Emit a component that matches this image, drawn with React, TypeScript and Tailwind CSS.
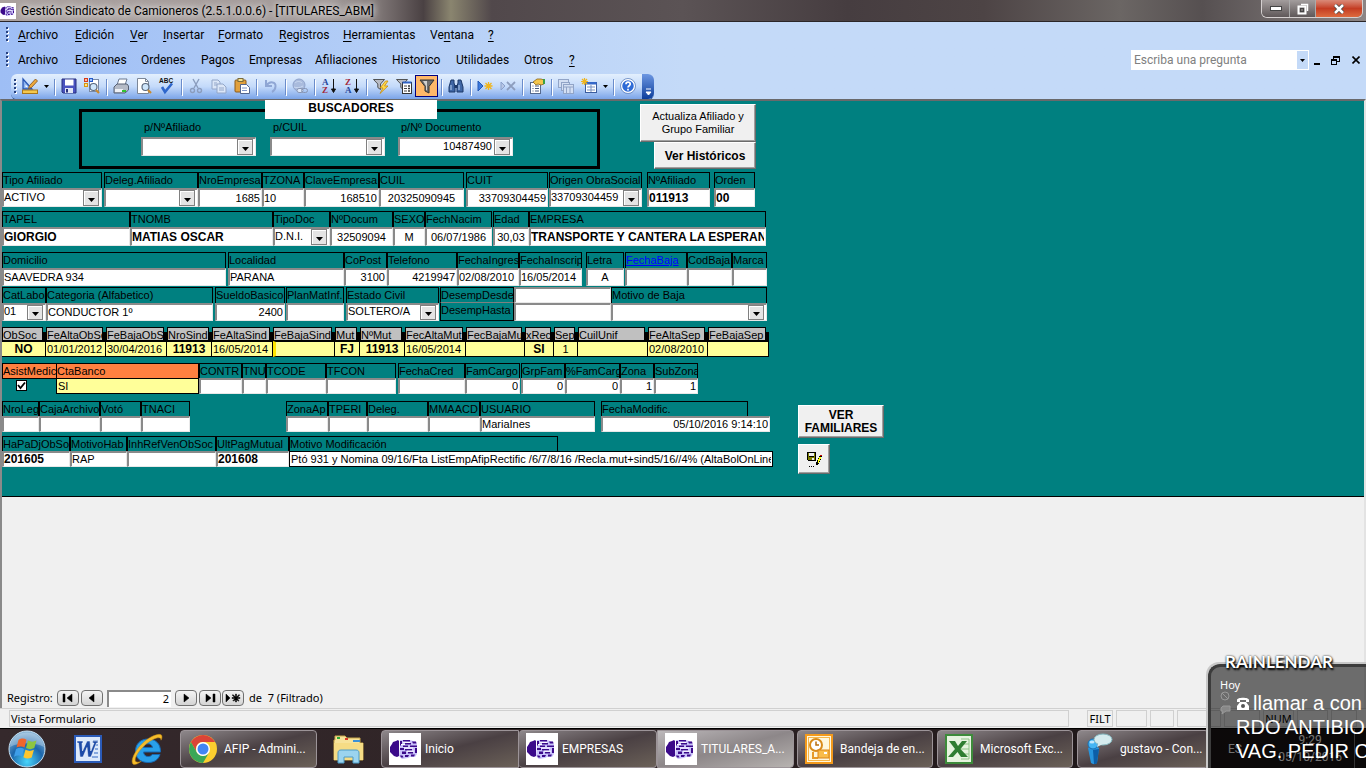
import { useId } from "react";
import type { ReactNode } from "react";

/* ---------- Form fields ---------- */

type FieldProps = {
  label: string;
  w: string;
  value?: string;
  align?: string;
  bold?: boolean;
  select?: boolean;
  small?: boolean;
  mid?: boolean;
  labelClass?: string;
  boxClass?: string;
  className?: string;
};

function Arrow() {
  return (
    <span className="pointer-events-none absolute top-0 right-0.5 bottom-0 flex w-4 items-end justify-center border border-[#808080] bg-[#e4e4e4] pb-[3px] shadow-[inset_1px_1px_0_#ffffff]">
      <svg width="7" height="4" viewBox="0 0 7 4" aria-hidden="true">
        <path d="M0 0h7L3.500 4z" fill="#000" />
      </svg>
    </span>
  );
}

const SUNKEN = "border-t-2 border-l-2 border-r border-b border-t-[#8a8a8a] border-l-[#8a8a8a] border-r-[#e8e8e8] border-b-[#e8e8e8] bg-white";

function Box({ id, value = "", align = "text-left", bold, select, className = "" }: {
  id?: string; value?: string; align?: string; bold?: boolean; select?: boolean; className?: string;
}) {
  const font = bold ? "text-[12px] font-bold" : "text-[11px]";
  return (
    <div className={`relative flex overflow-hidden ${className}`}>
      {select ? (
        <>
          <select id={id} defaultValue={value} className={`h-full w-full appearance-none bg-transparent pr-5 pb-0.5 leading-none outline-none ${align} ${font}`}>
            <option value={value}>{value}</option>
          </select>
          <Arrow />
        </>
      ) : (
        <input id={id} defaultValue={value} className={`h-full w-full min-w-0 bg-transparent pr-px pb-px leading-none outline-none ${align} ${font}`} />
      )}
    </div>
  );
}

function Field({ label, w, value, align, bold, select, small, mid, labelClass = "", boxClass = "", className = "" }: FieldProps) {
  const id = useId();
  const height = small ? "h-4" : mid ? "h-[18px]" : "h-[19px]";
  return (
    <div className={`flex shrink-0 flex-col ${w} ${className}`}>
      <label htmlFor={id} className={`block overflow-hidden border-t border-r border-l border-black text-[11px] leading-[14px] whitespace-nowrap ${small ? "h-[15px]" : "h-4"} ${labelClass}`}>
        {label}
      </label>
      <Box id={id} value={value} align={align} bold={bold} select={select} className={`${height} ${boxClass || SUNKEN}`} />
    </div>
  );
}

function Finder({ label, w, value, className = "" }: { label: string; w: string; value?: string; className?: string }) {
  const id = useId();
  return (
    <div className={`flex flex-col ${w} ${className}`}>
      <label htmlFor={id} className="h-4 pl-[3px] text-[11px] leading-[13px] whitespace-nowrap">{label}</label>
      <Box id={id} select value={value} align="text-right" className={`h-[19px] ${SUNKEN}`} />
    </div>
  );
}

type Strip = { l: string; v?: string; w: string; b?: boolean; a?: string; c?: string };

const STRIP: Strip[] = [
  { l: "ObSoc", v: "NO", w: "w-[44px]", b: true, a: "text-center" },
  { l: "FeAltaObSoc", v: "01/01/2012", w: "w-[60px]" },
  { l: "FeBajaObS", v: "30/04/2016", w: "w-[61px]" },
  { l: "NroSind", v: "11913", w: "w-[45px]", b: true, a: "text-center" },
  { l: "FeAltaSind", v: "16/05/2014", w: "w-[61px]" },
  { l: "FeBajaSind", w: "w-[62px]", c: "border-l-[3px] border-l-[#ffe600]" },
  { l: "Mut", v: "FJ", w: "w-[25px]", b: true, a: "text-center" },
  { l: "NºMut", v: "11913", w: "w-[45px]", b: true, a: "text-center" },
  { l: "FecAltaMut", v: "16/05/2014", w: "w-[61px]" },
  { l: "FecBajaMut", w: "w-[59px]" },
  { l: "xRec", v: "SI", w: "w-[29px]", b: true, a: "text-center" },
  { l: "Sep", v: "1", w: "w-[24px]", a: "text-center" },
  { l: "CuilUnif", w: "w-[70px]" },
  { l: "FeAltaSep", v: "02/08/2010", w: "w-[60px]" },
  { l: "FeBajaSep", w: "w-[61px]" },
];

function StripCell({ l, v, w, b, a, c = "" }: Strip) {
  const id = useId();
  return (
    <div className={`flex flex-col ${w}`}>
      <div className="flex h-[14px] bg-[linear-gradient(#008080_5px,#000_5px)] pr-[3px] pb-px">
        <label htmlFor={id} className="block h-[13px] w-full overflow-hidden border border-b-0 border-black bg-[#c0c0c0] text-[11px] leading-[15px] whitespace-nowrap">{l}</label>
      </div>
      <Box id={id} value={v} align={a} bold={b} className={`h-4 border-y border-r border-black bg-[#ffff99] pl-px ${c}`} />
    </div>
  );
}

/* ---------- Toolbar ---------- */

function Ico({ children }: { children: ReactNode }) {
  return <svg width="16" height="16" viewBox="0 0 16 16" fill="none" aria-hidden="true" className="shrink-0 overflow-visible">{children}</svg>;
}

const Lens = () => (
  <>
    <circle cx="9.500" cy="9" r="3.500" fill="#cfe6fb" stroke="#5d6b80" strokeWidth="1.200" />
    <path d="M12 12l3 3" stroke="#c98a2e" strokeWidth="2.200" />
  </>
);
const Funnel = () => <path d="M0.500 1.500h11L7.500 6v5.500L4.800 9.500V6z" fill="#b9bcc4" stroke="#444" strokeWidth=".9" />;

const SORT = { fontSize: 9, fontWeight: 700, fontFamily: "Liberation Serif, serif" };

const icons: Record<string, ReactNode> = {
  design: <><path d="M1 1v10h9z" fill="#8db4f0" stroke="#2a57b5" strokeWidth="1.300" /><path d="M3.500 6.500v2.500h2.300z" fill="#fff" /><rect x="0.500" y="12" width="15" height="3.500" fill="#f5c84c" stroke="#a8761a" /><path d="M6.500 10.500l1-3L13.500 1l2 2-6 6.500z" fill="#eda83c" stroke="#80501c" strokeWidth=".8" /></>,
  save: <><path d="M1 1h14v14H2l-1-1z" fill="#4a53c0" stroke="#28317e" /><rect x="4" y="1.500" width="8.500" height="6" fill="#fff" /><rect x="4" y="10" width="8" height="5" fill="#dfe4f5" /><rect x="5" y="11" width="2" height="3.500" fill="#28317e" /></>,
  search: <><rect x="5.500" y="1.500" width="9" height="12" fill="#fff" stroke="#7a8aa5" /><rect x="0.500" y="0.500" width="3" height="3" fill="#ffb9a0" stroke="#d43b1b" /><rect x="5.500" y="0.500" width="3" height="3" fill="#9fc3ff" stroke="#265bc8" /><rect x="0.500" y="5.500" width="3" height="3" fill="#ffe28a" stroke="#d8960e" /><Lens /></>,
  print: <><path d="M6 1h8l-2 6H4z" fill="#fff" stroke="#6b7890" /><path d="M1 9l3-3h10l1.500 2v4L12 15H1z" fill="#b4bac6" stroke="#566074" /><rect x="2" y="11" width="8" height="3" fill="#eef1f6" /><rect x="9" y="12" width="4" height="2" fill="#31c431" /></>,
  preview: <><path d="M1.500 .5h8l3 3v12h-11z" fill="#fff" stroke="#7c8798" /><path d="M9.500 .5v3h3" stroke="#7c8798" /><Lens /></>,
  spell: <><text x="0" y="5" fontSize="6.500" fontWeight="700" fontFamily="Liberation Sans, sans-serif" fill="#111">ABC</text><path d="M3 9l3 5L13 5.500" stroke="#2e66cc" strokeWidth="2.600" /></>,
  cut: <g stroke="#8b9dbd" strokeWidth="1.400"><path d="M5 1l5 9M11 1l-5 9" /><circle cx="4.500" cy="12.500" r="2" /><circle cx="11.500" cy="12.500" r="2" /></g>,
  copy: <g fill="#dbe6f7" stroke="#93a6c8"><path d="M1 2h6l2 2v7H1z" /><path d="M6 6h6l3 3v6H6z" /><path d="M8 10h5M8 12h5M3 5h3M3 7h3" /></g>,
  paste: <><rect x="1" y="2" width="11" height="12" rx="1" fill="#e1a03c" stroke="#8a5a1a" /><rect x="4" y="0.500" width="5" height="3" fill="#f7e28c" stroke="#7a6a3a" /><path d="M6.500 6.500h6l3 3v6h-9z" fill="#fff" stroke="#53658e" /><path d="M8 10h5M8 12.500h5" stroke="#7d94c8" /></>,
  undo: <path d="M3 2v6h6M3.500 7.500C7 2.500 13 4 12.500 8.500 12.300 11 11 13 9 14" stroke="#8fa6d4" strokeWidth="2" />,
  link: <><circle cx="7" cy="7" r="6" fill="#a9bbdd" stroke="#8fa3cb" /><path d="M3 5c2-2 5-2 7 0M2 9c2 1 6 1 9-1" stroke="#c9d8f0" /><rect x="5" y="10.500" width="6" height="4" rx="2" fill="#dde8f9" stroke="#8795b3" /><rect x="9.500" y="10.500" width="6" height="4" rx="2" stroke="#8795b3" /></>,
  az: <><text x="1" y="7" {...SORT} fill="#24469c">A</text><text x="1" y="15" {...SORT} fill="#a3283a">Z</text><path d="M12.500 1v12M10.500 11l2 3.500 2-3.500z" stroke="#111" fill="#111" /></>,
  za: <><text x="1" y="7" {...SORT} fill="#a3283a">Z</text><text x="1" y="15" {...SORT} fill="#24469c">A</text><path d="M12.500 1v12M10.500 11l2 3.500 2-3.500z" stroke="#111" fill="#111" /></>,
  fbolt: <><Funnel /><path d="M12.500 3L7 10h3l-3 5.500 8-7.500h-3.500L15 3z" fill="#ffd84a" stroke="#c48a10" strokeWidth=".8" /></>,
  fform: <><Funnel /><rect x="6.500" y="4.500" width="9" height="11" fill="#fff" stroke="#333" /><rect x="6.500" y="3.500" width="9" height="2" fill="#2f62c4" /><path d="M8 8h3M8 10.500h3M8 13h3" stroke="#444" /><path d="M12 8h2M12 10.500h2M12 13h2" stroke="#333" strokeWidth="1.500" /></>,
  filter: <><path d="M1 2h14L10 8.500V15l-4-2V8.500z" fill="#6e6e6e" stroke="#333" /><path d="M4 3h4v9.500L7 12V8z" fill="#d0d0d0" /></>,
  find: <><path d="M3 2h3v3l1 3v6H1V9zM10 2h3l2 7v5H9V8l1-3z" fill="#3f66a5" stroke="#1c3868" /><path d="M6.500 7h3v3h-3z" fill="#1c3868" /><path d="M3 7v5M11 7v5" stroke="#bcd3f4" /></>,
  newrec: <><path d="M1 3l5 5-5 5z" fill="#3d7be0" stroke="#2459b5" /><path d="M11.500 4v8M7.500 8h8M8.500 5l6 6M14.500 5l-6 6" stroke="#f0b51d" strokeWidth="1.300" /></>,
  delrec: <><path d="M1 4l4 4-4 4z" fill="#b7c6e4" stroke="#8aa0cb" /><path d="M7 4l8 8M15 4l-8 8" stroke="#8d9dbd" strokeWidth="1.800" /></>,
  props: <><rect x="1.500" y="4.500" width="10" height="11" fill="#fff" stroke="#55698e" /><path d="M3.500 8h1M6 8h4M3.500 10.500h1M6 10.500h4M3.500 13h1M6 13h4" stroke="#44597f" /><path d="M4 4l4-3h4l3 1v4l-3 1-3-1-2 1z" fill="#f4c64c" stroke="#8b6416" strokeWidth=".8" /><path d="M14 1h2v5h-2z" fill="#3aa044" /></>,
  db: <g fill="#d3dff3" stroke="#91a4c7"><rect x="0.500" y="1.500" width="10" height="8" /><rect x="3.500" y="4.500" width="8" height="8" /><rect x="5.500" y="6.500" width="10" height="9" /><path d="M5.500 9h10M8.500 9v6M12 9v6" /></g>,
  newobj: <><rect x="4.500" y="4.500" width="11" height="10" fill="#fff" stroke="#3b5c9e" /><rect x="4.500" y="4" width="11" height="2.500" fill="#3568c9" /><path d="M6 9h8M6 12h8M10 7v7" stroke="#7991bf" /><path d="M3.500 0v7M0 3.500h7M1 1l5 5M6 1L1 6" stroke="#f0b51d" strokeWidth="1.200" /></>,
  help: <><circle cx="8" cy="8" r="6.500" fill="#2f6bd6" stroke="#fff" strokeWidth="1.500" /><circle cx="8" cy="8" r="7.500" stroke="#5d80bd" strokeWidth=".8" /><path d="M6 6.200C6 3.500 10.200 3.500 10.200 6.200 10.200 7.700 8 7.800 8 9.600M8 10.800v1.700" stroke="#fff" strokeWidth="1.700" /></>,
};

const TOOLS = "design,v,|,save,search,|,print,preview,spell,|,cut,copy,paste,|,undo,|,link,|,az,za,|,fbolt,fform,filter,|,find,|,newrec,delrec,|,props,|,db,newobj,v,|,help".split(",");

function Toolbar() {
  return (
    <div className="ml-[11px] flex h-[25px] w-fit overflow-hidden rounded-md bg-linear-to-b from-[#e3effd] via-[#c4dafa] to-[#7ba4e8] shadow-[0_1px_0_#3b619c]">
      <Grip className="ml-[3px] self-center" />
      {TOOLS.map((t, i) =>
        t === "|" ? (
          <span key={i} className="flex w-1.5 items-center justify-center"><span className="h-4 w-px bg-[#6a8ccb] shadow-[1px_1px_0_#fff]" /></span>
        ) : t === "v" ? (
          <button key={i} type="button" aria-label="Más" className="flex w-2.5 items-center justify-center">
            <svg width="5" height="3" viewBox="0 0 5 3"><path d="M0 0h5L2.500 3z" fill="#000" /></svg>
          </button>
        ) : (
          <button key={i} type="button" aria-label={t} className={`flex w-[23px] items-center justify-center pb-px ${t === "filter" ? "mt-px mb-0.5 border border-[#000080] bg-[#ffb869]" : ""}`}>
            <Ico>{icons[t]}</Ico>
          </button>
        )
      )}
      <button type="button" aria-label="Opciones de barra" className="ml-[3px] flex w-3 items-end justify-center bg-linear-to-b from-[#6d97e2] to-[#0b3d9b] pb-[3px]">
        <svg width="7" height="8" viewBox="0 0 7 8"><path d="M1 1h5M1 4h5L3.500 7z" stroke="#fff" fill="#fff" /></svg>
      </button>
    </div>
  );
}

function Grip({ className = "" }: { className?: string }) {
  return (
    <svg width="4" height="15" viewBox="0 0 4 15" className={className} aria-hidden="true">
      {[0, 4, 8, 12].map((y) => (
        <g key={y}><rect x="1" y={y + 1} width="2" height="2" fill="#fff" /><rect x="0" y={y} width="2" height="2" fill="#27417f" /></g>
      ))}
    </svg>
  );
}

type MenuItem = [string, string, string, string];

const MENU1: MenuItem[] = [
  ["", "A", "rchivo", "w-[57px]"], ["", "E", "dición", "w-[55px]"], ["", "V", "er", "w-[33px]"], ["", "I", "nsertar", "w-[55px]"],
  ["", "F", "ormato", "w-[61px]"], ["", "R", "egistros", "w-[64px]"], ["", "H", "erramientas", "w-[87px]"], ["Ve", "n", "tana", "w-[58px]"], ["", "?", "", "w-[20px]"],
];
const MENU2: MenuItem[] = [
  ["Archivo", "", "", "w-[57px]"], ["Ediciones", "", "", "w-[66px]"], ["Ordenes", "", "", "w-[60px]"], ["Pagos", "", "", "w-[48px]"], ["Empresas", "", "", "w-[66px]"],
  ["Afiliaciones", "", "", "w-[77px]"], ["Historico", "", "", "w-[64px]"], ["Utilidades", "", "", "w-[68px]"], ["Otros", "", "", "w-[45px]"], ["", "?", "", "w-[20px]"],
];

function Menu({ items }: { items: MenuItem[] }) {
  return (
    <nav className="flex h-[25px] items-center pl-1.5 font-['Roboto',sans-serif] text-[12px]">
      <Grip className="mr-2" />
      {items.map(([a, u, b, w], i) => (
        <button key={i} type="button" className={`text-left whitespace-nowrap ${w}`}>{a}{u && <u className="underline-offset-2">{u}</u>}{b}</button>
      ))}
    </nav>
  );
}

/* ---------- Logos ---------- */

function Truck({ className }: { className: string }) {
  return (
    <svg viewBox="0 0 32 32" className={className} aria-hidden="true">
      <rect width="32" height="32" fill="#fff" />
      <path d="M11 7h10l6 2 1 3v9l-2 3h-5l-2 1-6 1-3-3 1-9z" fill="#c9c2fa" />
      <path d="M3 11l1-2 3-1 2-1 1 1v15l-2 1-3-1-2-2-2-2v-5z" fill="#3b0a8a" />
      <path d="M11 8h2v3l-2 2zM14 7h7v1.500h-7zM16 10h6v1.500h-6zM23 8.500h4l.5 2H24zM14 12.500h5V14h-5zM21 12.500h7V14h-7zM11 15h4v2h-4zM16 16h7v1.500h-7zM26 15h2v5h-2zM13 18.500h4V21h-4zM19 19h5v1.500h-5zM11 22.500h2.500l1 2H12zM16 22h4l-1 2h-3zM22 21.500h4l-1 2h-3z" fill="#3b0a8a" />
      <path d="M14 9.300l7 .2M15 15h9M12 11.500h4M18 18.200h7" stroke="#fff" strokeWidth="1" />
    </svg>
  );
}

function StartOrb() {
  return (
    <svg width="40" height="38" viewBox="0 0 40 38" aria-hidden="true">
      <defs>
        <radialGradient id="orb" cx=".5" cy=".85" r=".9"><stop offset="0" stopColor="#48d5fb" /><stop offset=".5" stopColor="#1c66ab" /><stop offset="1" stopColor="#9cc3de" /></radialGradient>
      </defs>
      <circle cx="20" cy="19" r="18" fill="url(#orb)" stroke="#c8e2f4" strokeWidth="1" />
      <path d="M3 17C4 8 11 2.500 20 2.500S36 8 37 17C28 12 12 12 3 17z" fill="#fff" opacity=".3" />
      <path d="M11.500 10c3-2 5.500-1.700 8-.2l-2 7.700c-2.500-1.500-5-1.500-8 0z" fill="#f0662c" />
      <path d="M21 10.500c3 1.500 5.500 1.500 8.500 0l-2.200 7.600c-3 1.500-5.500 1.500-8.300 0z" fill="#8dc63f" />
      <path d="M9 19c3-1.600 5.500-1.500 8 0l-2 7.500c-2.500-1.500-5-1.500-8 .2z" fill="#3e9ee8" />
      <path d="M18.500 19.800c3 1.500 5.500 1.500 8.400 0l-2.200 7.700c-3 1.500-5.500 1.500-8.300-.2z" fill="#fdc62e" />
    </svg>
  );
}

function WordLogo() {
  return (
    <svg width="28" height="28" viewBox="0 0 28 28" aria-hidden="true">
      <rect x="1" y="1" width="26" height="26" fill="#dce9fb" stroke="#2b5bb8" strokeWidth="2" />
      <path d="M19 6h5M21 10h3M21 14h3M20 18h4M18 22h6" stroke="#6b93d6" strokeWidth="1.500" />
      <path d="M3 6h6v2H8l.5 8L13 6h3l.8 10L20 8h-1.500V6H24v2h-1.500L17 22h-3l-1-9.500L9 22H6L4.500 8H3z" fill="#1d4ba8" stroke="#fff" strokeWidth=".5" />
    </svg>
  );
}

function IeLogo() {
  return (
    <svg width="34" height="34" viewBox="0 0 34 34" aria-hidden="true">
      <path d="M30.500 20H13.500c.4 3 2 4.500 4.600 4.500 2 0 3.300-.7 4-2H30c-1.800 5.500-6 8-12 8-7.500 0-12.500-4.500-12.500-11.500C5.500 12 10.500 7 18 7s12.800 4.800 12.500 13zM22.500 15.500c-.5-2.500-2-3.700-4.500-3.700s-4 1.300-4.500 3.700z" fill="#29a0ea" stroke="#1668b4" />
      <path d="M3 32C-1 28 9 11 21 5c6-3 11-4 11 0 0 1-.4 2.200-1 3.200.2-3-3-3.200-8-.7C13 12.500 4.500 24 5.200 28.500c.3 1.900 2.700 2.200 6 .8C8.500 31.500 4.500 33.500 3 32z" fill="#f6bd2b" stroke="#c58a10" strokeWidth=".5" />
    </svg>
  );
}

function ChromeLogo() {
  return (
    <svg width="30" height="30" viewBox="0 0 30 30" aria-hidden="true">
      <circle cx="15" cy="15" r="14" fill="#fbce2f" />
      <path d="M2.900 8A14 14 0 0 1 27.100 8H15a7 7 0 0 0-6.100 10.500z" fill="#db4437" />
      <path d="M2.900 8A14 14 0 0 0 15 29l6.100-10.500A7 7 0 0 1 9 18.500z" fill="#3aa757" />
      <circle cx="15" cy="15" r="7" fill="#fff" /><circle cx="15" cy="15" r="5.500" fill="#4285f4" />
    </svg>
  );
}

function ExplorerLogo() {
  return (
    <svg width="33" height="30" viewBox="0 0 33 30" aria-hidden="true">
      <path d="M3 2h10l2 2h13v5h3v17H2V6h1z" fill="#f7e39a" stroke="#c7a548" />
      <path d="M21 6h7v2h-7z" fill="#3a91d6" />
      <path d="M5 3h3v2H5z" fill="#2ba836" /><path d="M13 4h3v2h-3z" fill="#d93a28" />
      <path d="M2 9h29v17H2z" fill="#f5dc85" />
      <path d="M6 29V19c0-2 1-3 3-3h15c2 0 3 1 3 3v10h-6v-6h-9v6z" fill="#9bd4ef" stroke="#4c9cc7" />
    </svg>
  );
}

function OutlookLogo() {
  return (
    <svg width="28" height="30" viewBox="0 0 28 30" aria-hidden="true">
      <rect x="1" y="1" width="26" height="28" fill="#fff7dc" stroke="#f39a1c" strokeWidth="2" />
      <rect x="3.500" y="3.500" width="21" height="23" stroke="#f7b64a" fill="none" />
      <circle cx="11" cy="11" r="6" fill="#fff" stroke="#d98b1a" strokeWidth="2" /><path d="M11 7.500V11h3" stroke="#b66d10" strokeWidth="1.500" fill="none" />
      <path d="M8 18v6h5" stroke="#e79a28" strokeWidth="2" fill="none" />
      <rect x="13" y="16" width="11" height="8" fill="#f9bc4a" stroke="#d98416" /><path d="M19 18h3v2h-3z" fill="#fff" />
    </svg>
  );
}

function ExcelLogo() {
  return (
    <svg width="28" height="30" viewBox="0 0 28 30" aria-hidden="true">
      <rect x="1" y="1" width="26" height="28" fill="#e6f3df" stroke="#3d8b3b" strokeWidth="2" />
      <path d="M16 5h8v20h-8M16 10h8M16 15h8M16 20h8" stroke="#8fc388" fill="none" />
      <path d="M4 7h6l3 5 4-5h5l-6.500 8L23 23h-7l-3.500-5L8 23H3l7-8z" fill="#2f7d32" />
    </svg>
  );
}

function ChatLogo() {
  return (
    <svg width="28" height="32" viewBox="0 0 28 32" aria-hidden="true">
      <path d="M3 15c3-2 8-2 11 0l-2 15c-2 1.500-4 1.500-6 0z" fill="#2794dd" /><path d="M8 17l1 14c1.500 0 2.300-.3 3-1l2-14z" fill="#0c5ea8" />
      <circle cx="8" cy="11" r="5" fill="#45b5f3" stroke="#176fb3" /><ellipse cx="7" cy="9" rx="2.500" ry="1.500" fill="#c0e8ff" />
      <ellipse cx="18" cy="6.500" rx="9" ry="5.500" fill="#d5ebee" stroke="#84b8c0" /><path d="M13 10l-1 4 6-3z" fill="#d5ebee" />
    </svg>
  );
}

/* ---------- Taskbar ---------- */

function Task({ icon, text, w, active, className = "" }: { icon: ReactNode; text: string; w: string; active?: boolean; className?: string }) {
  return (
    <button type="button" className={`flex h-[38px] items-center gap-1 rounded-sm border border-[#9c9498] pl-[7px] text-left whitespace-nowrap text-white ${w} ${active ? "bg-linear-to-br from-[#bcb8ba] via-[#8d8789] to-[#b7b3b0]" : "bg-linear-to-br from-[#8e888b] via-[#4a4043] to-[#6b6158]"} ${className}`}>
      {icon}
      <span>{text}</span>
    </button>
  );
}

function Taskbar() {
  return (
    <footer className="flex h-10 items-center overflow-hidden border-t border-black bg-linear-to-r from-[#35292c] via-[#2d2224] to-[#171213] font-['Roboto',sans-serif] text-[12px]">
      <button type="button" aria-label="Inicio de Windows" className="ml-[7px]"><StartOrb /></button>
      <button type="button" aria-label="Word" className="ml-[27px]"><WordLogo /></button>
      <button type="button" aria-label="Internet Explorer" className="ml-7"><IeLogo /></button>
      <Task icon={<ChromeLogo />} text="AFIP - Admini..." w="w-[137px]" className="ml-4 gap-1.5" />
      <button type="button" aria-label="Explorador" className="mr-4 ml-[15px]"><ExplorerLogo /></button>
      <Task icon={<Truck className="size-8" />} text="Inicio" w="w-[138px]" className="rounded-r-none" />
      <Task icon={<Truck className="size-8" />} text="EMPRESAS" w="w-[138px]" className="rounded-none border-l-0" />
      <Task icon={<Truck className="size-8" />} text="TITULARES_A..." w="w-[137px]" active className="rounded-l-none" />
      <Task icon={<OutlookLogo />} text="Bandeja de en..." w="w-[136px]" className="ml-[3px] gap-[7px]" />
      <Task icon={<ExcelLogo />} text="Microsoft Exc..." w="w-[136px]" className="ml-1 gap-[7px]" />
      <Task icon={<ChatLogo />} text="gustavo - Con..." w="w-[132px]" className="ml-1 gap-[7px]" />
      <span className="ml-[19px] text-white">ES</span>
      <div className="mr-3 ml-auto flex flex-col items-center leading-[17px] text-white"><span>9:29</span><span>05/10/2016</span></div>
      <span className="h-full w-3 border-l border-[#777]" />
    </footer>
  );
}

function Rainlendar() {
  return (
    <aside className="absolute right-0 bottom-0 h-[104px] w-[158px] rounded-tl-xl border-t-[3px] border-l-[3px] border-[#3c3c3c] bg-black/55 text-white shadow-[-1px_-1px_0_1px_#c8c8c8]">
      <h2 className="absolute -top-3.5 left-[14px] text-[17px] leading-[18px] font-bold [font-family:Lato,sans-serif] [text-shadow:0_0_2px_#000,1px_2px_2px_#000]">
        RAINLENDAR
      </h2>
      <p className="mt-2.5 ml-[9px] font-['Noto_Sans',sans-serif] text-[11px] leading-4">Hoy</p>
      <svg width="11" height="26" viewBox="0 0 11 26" className="absolute top-6 left-[9px]" fill="none" stroke="#999" aria-hidden="true">
        <circle cx="5" cy="5" r="4" /><path d="M2 2l6 6" /><path d="M3 15h7v5H6l-4 3 1-3H1v-3z" fill="#888" />
      </svg>
      <div className="-mt-0.5 ml-[25px] overflow-hidden text-[20px] leading-6 whitespace-nowrap [font-family:'Liberation_Sans',sans-serif]">
        <p className="flex items-center gap-[3px]">
          <svg width="14" height="13" viewBox="0 0 14 13" aria-hidden="true"><path d="M1 3c0-3 12-3 12 0v2h-3V3H4v2H1zM4 5h6l3 4v4H1V9z" fill="#fff" /><circle cx="7" cy="9" r="2" fill="#555" /></svg>
          llamar a con
        </p>
        <p>RDO ANTIBIO</p>
        <p>VAG. PEDIR C</p>
      </div>
    </aside>
  );
}

/* ---------- Record navigation and status ---------- */

function NavButton({ d, label, className = "" }: { d: string; label: string; className?: string }) {
  return (
    <button type="button" aria-label={label} className={`flex h-4 w-[22px] items-center justify-center rounded-sm border border-[#707070] bg-linear-to-b from-[#f4f4f4] to-[#d4d4d4] ${className}`}>
      <svg width="18" height="10" viewBox="0 0 18 10" aria-hidden="true"><path d={d} fill="#000" stroke="#000" strokeWidth=".5" /></svg>
    </button>
  );
}

function RecordNav() {
  return (
    <div className="flex h-[18px] items-center pl-[7px] font-['Noto_Sans',sans-serif] text-[11px]">
      <label htmlFor="rec" className="w-[50px]">Registro:</label>
      <NavButton label="Primero" d="M4 1h2v8H4zM13 1v8L8 5z" />
      <NavButton label="Anterior" d="M11 1v8L6 5z" className="ml-0.5" />
      <input id="rec" defaultValue="2" className="mx-1 h-[17px] w-[64px] border-t-2 border-l-2 border-[#8a8a8a] bg-white px-0.5 pb-0.5 text-right text-[11px] outline-none" />
      <NavButton label="Siguiente" d="M7 1v8l5-4z" />
      <NavButton label="Último" d="M5 1v8l5-4zM12 1h2v8h-2z" className="ml-0.5" />
      <NavButton label="Nuevo" d="M2 1v8l4-4zM11.500 1h1v8h-1zM8 4.500h8v1H8zM9 1.500l6 6-.7.700-6-6zM15 1.500l-6 6 .7.700 6-6z" className="ml-px" />
      <span className="ml-[5px] whitespace-pre">de  7 (Filtrado)</span>
    </div>
  );
}

function StatusBar() {
  const cell = "h-[17px] border border-[#d0d0d0]";
  return (
    <div className="flex h-5 items-center border-t border-[#d0d0d0] pl-[9px] font-['Noto_Sans',sans-serif] text-[11px] leading-4">
      <span className={`min-w-0 flex-1 pl-px ${cell}`}>Vista Formulario</span>
      <div className="ml-[18px] flex w-[279px] gap-[3px]">
        <span className={`w-[26px] text-center ${cell}`}>FILT</span>
        <span className={`w-[31px] ${cell}`} />
        <span className={`w-[24px] ${cell}`} />
        <span className={`w-[44px] ${cell}`} />
        <span className={`w-[36px] ${cell}`} />
        <span className={`w-[31px] text-center ${cell}`}>NUM</span>
        <span className={`w-[31px] ${cell}`} />
        <span className={`w-[26px] ${cell}`} />
      </div>
    </div>
  );
}

/* ---------- Window ---------- */

function TitleBar() {
  return (
    <header className="flex h-[22px] items-start border-b border-[#2b2628] bg-[linear-gradient(90deg,#aaa19f_0,#a39b9a_24%,#8b8382_27%,#4a4143_31%,#8a856f_33%,#51484b_36%,#5b5355_50%,#463d40_62%,#4d4445_72%,#6b6664_82%,#565051_88%,#8c8585_100%)] font-['Roboto',sans-serif] text-[12px]">
      <Truck className="mt-[3px] size-4" />
      <h1 className="ml-[5px] text-[12px] leading-[22px] font-normal text-black [text-shadow:0_0_6px_#fff,0_0_8px_#ddd]">Gestión Sindicato de Camioneros (2.5.1.0.0.6) - [TITULARES_ABM]</h1>
      <div className="mr-[3px] ml-auto flex h-[18px] overflow-hidden rounded-b-md border border-t-0 border-[#d5d0d0]">
        <button type="button" aria-label="Minimizar" className="flex w-7 items-center justify-center border-r border-[#aaa] bg-linear-to-b from-[#a39d9d] to-[#5f5859]"><svg width="12" height="5"><rect x=".5" y=".5" width="11" height="4" fill="#fff" stroke="#444" /></svg></button>
        <button type="button" aria-label="Restaurar" className="flex w-[26px] items-center justify-center border-r border-[#aaa] bg-linear-to-b from-[#a39d9d] to-[#5f5859]"><svg width="12" height="12" fill="none"><path d="M4 1.500h6.500V8" stroke="#fff" strokeWidth="1.500" /><rect x="1.500" y="3.500" width="7" height="7" stroke="#fff" strokeWidth="2" /><rect x="3.500" y="5.500" width="3" height="3" stroke="#444" /></svg></button>
        <button type="button" aria-label="Cerrar" className="flex w-[46px] items-center justify-center bg-linear-to-b from-[#d98a78] via-[#c43c22] to-[#dd6a3e]"><svg width="12" height="10"><path d="M2 1l8 8M10 1L2 9" stroke="#444" strokeWidth="4" /><path d="M2 1l8 8M10 1L2 9" stroke="#fff" strokeWidth="2.500" /></svg></button>
      </div>
    </header>
  );
}

const BTN = "border border-t-white border-l-white border-r-[#6b6b6b] border-b-[#6b6b6b] bg-[#f0f0f0] shadow-[inset_-1px_-1px_0_#a0a0a0]";

function FormPanel() {
  return (
    <main className="border-b border-black bg-[#008080] pb-[22px] [font-family:'Liberation_Sans',Arial,sans-serif]">
      <div className="flex h-[71px]">
        <section className="relative mt-2 ml-[77px] flex h-[60px] w-[521px] border-[3px] border-black pl-[59px]">
          <h2 className="absolute -top-3 left-[183px] h-[19px] w-[172px] bg-white text-center text-[12px] leading-4 font-bold">BUSCADORES</h2>
          <Finder label="p/NºAfiliado" w="w-[115px]" className="mt-[9px]" />
          <Finder label="p/CUIL" w="w-[115px]" className="mt-[9px] ml-[14px]" />
          <Finder label="p/Nº Documento" w="w-[115px]" value="10487490" className="mt-[9px] ml-[13px]" />
        </section>
        <div className="mt-[3px] ml-10 flex w-[116px] flex-col items-end">
          <button type="button" className={`h-[38px] w-full text-[11px] leading-[13px] ${BTN}`}>Actualiza Afiliado y<br />Grupo Familiar</button>
          <button type="button" className={`h-[27px] w-[102px] text-[12px] font-bold whitespace-nowrap ${BTN}`}>Ver Históricos</button>
        </div>
      </div>

      <div className="flex">
        <Field label="Tipo Afiliado" w="w-[100px]" value="ACTIVO" select />
        <Field label="Deleg.Afiliado" w="w-[94px]" select className="ml-0.5" />
        <Field label="NroEmpresa" w="w-[64px]" value="1685" align="text-right" />
        <Field label="TZONA" w="w-[42px]" value="10" />
        <Field label="ClaveEmpresa" w="w-[75px]" value="168510" align="text-right" />
        <Field label="CUIL" w="w-[85px]" value="20325090945" align="text-center" />
        <Field label="CUIT" w="w-[82px]" value="33709304459" align="text-right" className="ml-0.5" />
        <Field label="Origen ObraSocial" w="w-[93px]" value="33709304459" select className="ml-px" />
        <Field label="NºAfiliado" w="w-[63px]" value="011913" bold className="ml-[5px]" />
        <Field label="Orden" w="w-[41px]" value="00" bold className="ml-1" />
      </div>

      <div className="mt-1 flex">
        <Field label="TAPEL" w="w-[128px]" value="GIORGIO" bold />
        <Field label="TNOMB" w="w-[143px]" value="MATIAS OSCAR" bold />
        <Field label="TipoDoc" w="w-[57px]" value="D.N.I." select />
        <Field label="NºDocum" w="w-[63px]" value="32509094" align="text-center" />
        <Field label="SEXO" w="w-[32px]" value="M" align="text-center" />
        <Field label="FechNacim" w="w-[67px]" value="06/07/1986" align="text-center" />
        <Field label="Edad" w="w-[36px]" value="30,03" align="text-center" className="ml-px" />
        <Field label="EMPRESA" w="w-[237px]" value="TRANSPORTE Y CANTERA LA ESPERANZA" bold />
      </div>

      <div className="mt-1.5 flex">
        <Field mid label="Domicilio" w="w-[224px]" value="SAAVEDRA 934" />
        <Field mid label="Localidad" w="w-[116px]" value="PARANA" className="ml-0.5" />
        <Field mid label="CoPost" w="w-[43px]" value="3100" align="text-right" />
        <Field mid label="Telefono" w="w-[70px]" value="4219947" align="text-right" />
        <Field mid label="FechaIngreso" w="w-[62px]" value="02/08/2010" />
        <Field mid label="FechaInscrip" w="w-[63px]" value="16/05/2014" />
        <Field mid label="Letra" w="w-[38px]" value="A" align="text-center" className="ml-1" />
        <Field mid label="FechaBaja" w="w-[62px]" labelClass="text-[#0000ff] underline" className="ml-px" />
        <Field mid label="CodBaja" w="w-[45px]" />
        <Field mid label="Marca" w="w-[35px]" />
      </div>

      <div className="mt-px flex">
        <Field mid label="CatLaboral" w="w-[44px]" value="01" select />
        <Field mid label="Categoria (Alfabetico)" w="w-[167px]" value="CONDUCTOR 1º" />
        <Field mid label="SueldoBasico" w="w-[70px]" value="2400" align="text-right" className="ml-0.5" />
        <Field mid label="PlanMatInf." w="w-[58px]" className="ml-px" />
        <Field mid label="Estado Civil" w="w-[93px]" value="SOLTERO/A" select className="ml-0.5" />
        <div className="ml-px grid grid-cols-[74px_97px] grid-rows-[16px_18px] text-[11px] leading-[14px]">
          <label htmlFor="desde" className="overflow-hidden border border-b-[#808080] border-black">DesempDesde</label>
          <Box id="desde" className={SUNKEN} />
          <label htmlFor="hasta" className="overflow-hidden border border-t-0 border-black">DesempHasta</label>
          <Box id="hasta" className={SUNKEN} />
        </div>
        <Field mid label="Motivo de Baja" w="w-[156px]" select />
      </div>

      <div className="mt-1.5 flex">
        {STRIP.map((c) => (
          <StripCell key={c.l} {...c} />
        ))}
      </div>

      <div className="mt-1.5 flex">
        <div className="flex w-[54px] flex-col items-center">
          <label htmlFor="asist" className="h-[16px] w-full overflow-hidden border border-r-0 border-black bg-[#ff8040] text-[11px] leading-[15px]">AsistMedic</label>
          <span className="relative mt-px -ml-4 size-[11px]">
            <input id="asist" type="checkbox" defaultChecked className="block size-[11px] appearance-none border border-black bg-white" />
            <svg width="9" height="9" viewBox="0 0 9 9" className="pointer-events-none absolute top-px left-px" aria-hidden="true"><path d="M1 4l2.500 3L8 1.500" stroke="#000" strokeWidth="1.800" fill="none" /></svg>
          </span>
        </div>
        <Field small label="CtaBanco" w="w-[143px]" value="SI" labelClass="bg-[#ff8040]" boxClass="border border-black bg-[#ffff99] pl-px" />
        <Field small label="CONTR" w="w-[43px]" />
        <Field small label="TNUM" w="w-[24px]" />
        <Field small label="TCODE" w="w-[60px]" />
        <Field small label="TFCON" w="w-[70px]" />
        <Field small label="FechaCred" w="w-[67px]" className="ml-0.5" />
        <Field small label="FamCargo" w="w-[55px]" value="0" align="text-right" />
        <Field small label="GrpFam" w="w-[44px]" value="0" align="text-right" className="ml-px" />
        <Field small label="%FamCargo" w="w-[55px]" value="0" align="text-right" />
        <Field small label="Zona" w="w-[34px]" value="1" align="text-right" />
        <Field small label="SubZona" w="w-[44px]" value="1" align="text-right" />
      </div>

      <div className="mt-[7px] flex">
        <div className="flex w-[771px] flex-col gap-1">
          <div className="flex">
            <Field small label="NroLeg" w="w-[37px]" />
            <Field small label="CajaArchivo" w="w-[61px]" />
            <Field small label="Votó" w="w-[41px]" />
            <Field small label="TNACI" w="w-[49px]" />
            <Field small label="ZonaAp" w="w-[42px]" className="ml-24" />
            <Field small label="TPERI" w="w-[39px]" />
            <Field small label="Deleg." w="w-[61px]" />
            <Field small label="MMAACD" w="w-[52px]" />
            <Field small label="USUARIO" w="w-[115px]" value="MariaInes" />
            <Field small label="FechaModific." w="w-[169px]" value="05/10/2016 9:14:10" align="text-right" labelClass="mr-[22px]" className="ml-1.5" />
          </div>
          <div className="flex">
            <Field small label="HaPaDjObSo" w="w-[68px]" value="201605" bold />
            <Field small label="MotivoHab" w="w-[57px]" value="RAP" />
            <Field small label="InhRefVenObSoc" w="w-[89px]" />
            <Field small label="UltPagMutual" w="w-[73px]" value="201608" bold />
            <Field small label="Motivo Modificación" w="w-[484px]" value="Ptó 931 y Nomina 09/16/Fta ListEmpAfipRectific /6/7/8/16 /Recla.mut+sind5/16//4% (AltaBolOnLine" labelClass="mr-[215px]" boxClass="border border-black bg-white pl-px" />
          </div>
        </div>
        <div className="mt-1 ml-[25px] flex flex-col items-start gap-1.5">
          <button type="button" className={`h-[33px] w-[86px] text-[12px] leading-[13px] font-bold ${BTN}`}>VER<br />FAMILIARES</button>
          <button type="button" aria-label="Guardar" className={`flex h-[30px] w-8 items-center justify-center ${BTN}`}>
            <svg width="17" height="17" viewBox="0 0 17 17" shapeRendering="crispEdges" aria-hidden="true">
              <path d="M1 1h9v9H2l-1-1z" fill="#000" /><path d="M2 2h1v4h5V2h1v7H2z" fill="#808000" /><path d="M3 2h5v3H3z" fill="#f0f0f0" /><path d="M6 7h2v2H6z" fill="#f0f0f0" />
              <path d="M14 4h2v2h-1v3h-1v2h-1v2h-1v1h-2v-3h1V9h1V7h1V5h1z" fill="#000" /><path d="M14 6h1v2h-1v2h-1v2h-1v-2h-1 1V8h1V6z" fill="#ffff00" /><path d="M14 4h2v1h-2z" fill="#c00" />
              <path d="M3 15h1v1H3zM5 15h1v1H5zM7 15h1v1H7z" fill="#000" />
            </svg>
          </button>
        </div>
      </div>
    </main>
  );
}

export default function App() {
  return (
    <div className="relative flex min-h-screen flex-col overflow-hidden bg-[#f0f0f0] text-black">
      <TitleBar />
      <div className="flex h-[77px] bg-linear-to-r from-[#9ebef5] via-[#c4daf8] via-50% to-[#c4daf8]">
        <div className="flex flex-col">
          <Menu items={MENU1} />
          <Menu items={MENU2} />
          <div className="mt-0.5"><Toolbar /></div>
        </div>
        <div className="mt-7 mr-1.5 ml-auto flex h-5 items-center">
          <div className="flex h-5 w-[178px] border border-white bg-white">
            <input aria-label="Pregunta" placeholder="Escriba una pregunta" className="min-w-0 flex-1 bg-white px-0.5 pb-px font-['Roboto',sans-serif] text-[12px] outline-none placeholder:text-[#808080]" />
            <button type="button" aria-label="Abrir lista" className="flex w-[11px] items-center justify-center bg-[#c4daf8]"><svg width="5" height="3"><path d="M0 0h5L2.500 3z" /></svg></button>
          </div>
          <button type="button" aria-label="Minimizar ventana" className="ml-[5px]"><svg width="7" height="9"><rect y="7" width="6" height="2" /></svg></button>
          <button type="button" aria-label="Restaurar ventana" className="ml-2.5"><svg width="9" height="9" fill="none" stroke="#000" shapeRendering="crispEdges"><path d="M2.500 3V.500h6v5H6M2 1h7" /><path d="M.500 3.500h5v5h-5zM0 4h6" /></svg></button>
          <button type="button" aria-label="Cerrar ventana" className="ml-3"><svg width="8" height="8"><path d="M.500 .500l7 7M7.500 .500l-7 7" stroke="#000" strokeWidth="1.600" /></svg></button>
        </div>
      </div>
      <div className="flex flex-1 flex-col border-t-2 border-r-2 border-l-2 border-t-[#69696b] border-r-[#e3e3e3] border-l-[#8a8a8a]">
        <FormPanel />
        <div className="flex-1" />
        <div className="-ml-0.5 pb-px"><RecordNav /></div>
      </div>
      <StatusBar />
      <Taskbar />
      <Rainlendar />
    </div>
  );
}
